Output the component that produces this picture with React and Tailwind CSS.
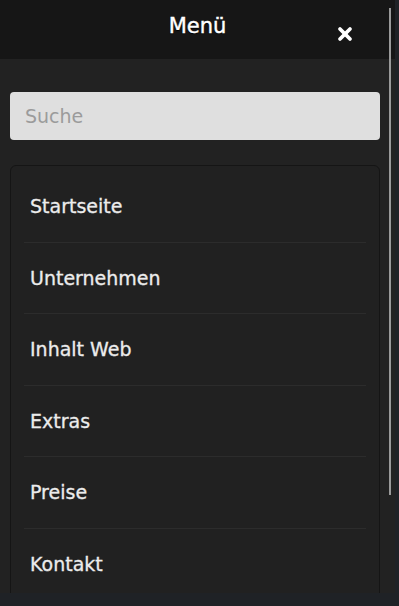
import React from 'react'
import { X } from 'lucide-react'

const items = ['Startseite', 'Unternehmen', 'Inhalt Web', 'Extras', 'Preise', 'Kontakt']

export default function App() {
  return (
    <div
      className="h-[606px] w-[399px] overflow-hidden bg-[#1f2226]"
      style={{ fontFamily: '"DejaVu Sans", "Open Sans", sans-serif' }}
    >
      <div className="relative h-[593px] w-[395px] overflow-hidden bg-[#222222]">
        {/* Header */}
        <div className="flex h-[59px] items-start justify-center bg-[#161616] pt-[11px]">
          <h1 className="text-[21px] leading-[30px] text-white [-webkit-text-stroke:0.4px_#fff] [text-shadow:0_1px_1px_#000]">
            Menü
          </h1>
          <button className="absolute left-[335px] top-[24px] text-white">
            <X size={20} strokeWidth={4.5} />
          </button>
        </div>

        {/* Scrollbar */}
        <div className="absolute right-[4px] top-[8px] h-[487px] w-[2px] bg-[#9a9a9a]" />

        <div className="px-[10px] pr-[15px] pt-[33px]">
          <div className="flex h-[48px] items-center rounded-[4px] bg-[#dfdfdf] pl-[15px] text-[19px] text-[#9b9b9b]">
            Suche
          </div>

          <div className="mt-[25px] rounded-[6px] border border-[#151515] bg-[#212121] px-[13px] pt-[5px] pb-[20px]">
            <ul>
              {items.map((item, i) => (
                <li
                  key={item}
                  className={`flex h-[71.5px] items-center pl-[6px] text-[19px] text-[#ececec] [-webkit-text-stroke:0.3px_#ececec] ${
                    i < items.length - 1 ? 'border-b border-[#2c2c2c]' : ''
                  }`}
                >
                  {item}
                </li>
              ))}
            </ul>
          </div>
        </div>
      </div>
    </div>
  )
}
